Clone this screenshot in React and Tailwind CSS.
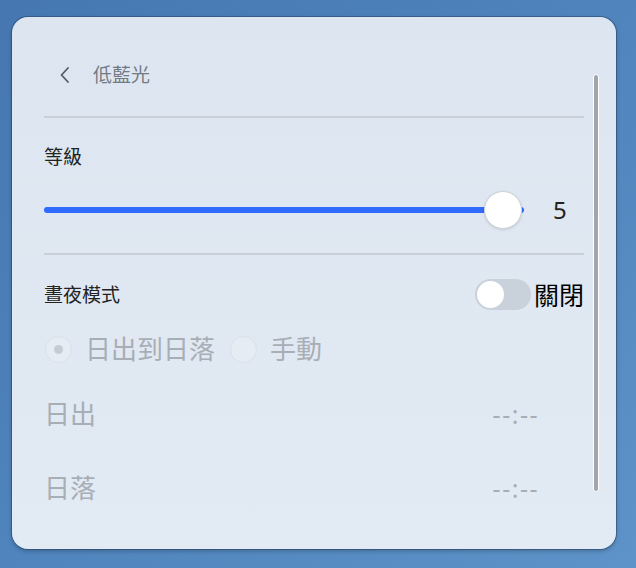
import React, { useState } from "react";

// low blue light settings panel
const font = { fontFamily: '"Noto Sans", "Noto Sans CJK TC", sans-serif' };

const Radio = ({ checked, label }) => (
  <div className="flex items-center">
    <span className="flex h-[27px] w-[27px] items-center justify-center rounded-full border border-[#d9e0e9] bg-[#e6ecf4]">
      {checked && <span className="h-[9px] w-[9px] rounded-full bg-[#c6ccd5]" />}
    </span>
    <span className="ml-[13px] text-[26px] leading-[36px] text-[#a8aeb5]">{label}</span>
  </div>
);

const App = () => {
  const [level] = useState(5);
  const [nightMode] = useState(false);

  return (
    <div
      style={font}
      className="h-[568px] w-[636px] bg-gradient-to-br from-[#4677b0] via-[#4f84bc] to-[#5d93c8] pl-[12px] pt-[17px]"
    >
      <div className="relative h-[532px] w-[604px] rounded-2xl bg-gradient-to-b from-[#dde6f0] to-[#e2eaf4] px-[32px] pt-[44px] shadow-[0_0_0_1px_rgba(40,70,110,0.55),0_2px_4px_rgba(0,0,0,0.25)]">
        {/* header */}
        <div className="flex h-[28px] items-center">
          <svg width="28" height="28" viewBox="0 0 28 28" className="ml-[6px]">
            <path d="M18 7 L11.5 14 L18 21" fill="none" stroke="#555b63" strokeWidth="1.8" strokeLinecap="round" strokeLinejoin="round" />
          </svg>
          <span className="ml-[15px] text-[19px] leading-[28px] text-[#737a83]">低藍光</span>
        </div>
        <div className="mt-[27px] h-[2px] bg-[#c8cfd8]" />

        {/* level */}
        <div className="mt-[25px] text-[19px] leading-[28px] text-[#222]">等級</div>
        <div className="mt-[20px] flex h-[38px] items-center">
          <div className="relative h-[38px] flex-1">
            <div className="absolute left-0 right-0 top-[16px] h-[6px] rounded-full bg-[#2f6bff]" />
            <div className="absolute right-[2px] top-0 h-[38px] w-[38px] rounded-full border border-[#cdd1d6] bg-white shadow-[0_1px_3px_rgba(0,0,0,0.12)]" />
          </div>
          <div className="w-[60px] pl-[29px] text-[24px] leading-[38px] text-[#222]">{level}</div>
        </div>
        <div className="mt-[24px] h-[2px] bg-[#c8cfd8]" />

        {/* day/night mode */}
        <div className="mt-[24px] flex h-[31px] items-center justify-between">
          <span className="text-[19px] leading-[28px] text-[#222]">晝夜模式</span>
          <div className="flex items-center gap-[3px]">
            <span className="flex h-[31px] w-[56px] items-center rounded-full bg-[#c9d1db] px-[2px]">
              <span className={`h-[27px] w-[27px] rounded-full bg-white ${nightMode ? "ml-auto" : ""}`} />
            </span>
            <span className="text-[25px] leading-[36px] text-black">{nightMode ? "開啟" : "關閉"}</span>
          </div>
        </div>

        <div className="mt-[21px] flex h-[36px] items-center gap-[15px] pl-[1px]">
          <Radio checked label="日出到日落" />
          <Radio label="手動" />
        </div>

        <div className="mt-[29px] flex h-[36px] items-center justify-between pr-[45px] text-[#a8aeb5]">
          <span className="text-[26px] leading-[36px]">日出</span>
          <span className="text-[25px] leading-[36px] tracking-[1.5px]">--:--</span>
        </div>
        <div className="mt-[38px] flex h-[36px] items-center justify-between pr-[45px] text-[#a8aeb5]">
          <span className="text-[26px] leading-[36px]">日落</span>
          <span className="text-[25px] leading-[36px] tracking-[1.5px]">--:--</span>
        </div>

        {/* scrollbar */}
        <div className="absolute right-[17px] top-[57px] h-[418px] w-[6px] rounded-full border border-white bg-[#a1a6ad]" />
      </div>
    </div>
  );
};

export default App;
